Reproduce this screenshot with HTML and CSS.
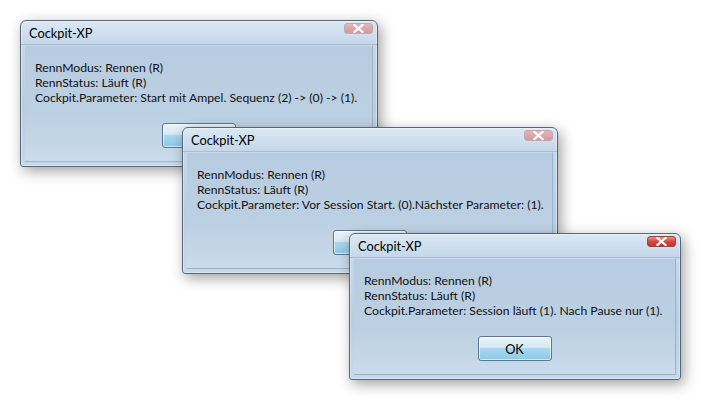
FILE: index.html
```html
<!DOCTYPE html>
<html>
<head>
<meta charset="utf-8">
<link rel="stylesheet" href="styles.css">
</head>
<body>
<div class="desktop">
  <div class="win win1">
    <div class="titlebar"><span class="title">Cockpit-XP</span><span class="close inactive"><svg width="11" height="9" viewBox="0 0 11 9"><path d="M1.5 1 L9.5 8 M9.5 1 L1.5 8" stroke="#fff" stroke-width="2.2" stroke-linecap="square"/></svg></span></div>
    <div class="client">
      <div class="msg">
        <div>RennModus: Rennen (R)</div>
        <div>RennStatus: Läuft (R)</div>
        <div>Cockpit.Parameter: Start mit Ampel. Sequenz (2) -&gt; (0) -&gt; (1).</div>
      </div>
      <div class="btnrow"><button class="btn">OK</button></div>
    </div>
  </div>
  <div class="win win2">
    <div class="titlebar"><span class="title">Cockpit-XP</span><span class="close inactive"><svg width="11" height="9" viewBox="0 0 11 9"><path d="M1.5 1 L9.5 8 M9.5 1 L1.5 8" stroke="#fff" stroke-width="2.2" stroke-linecap="square"/></svg></span></div>
    <div class="client">
      <div class="msg">
        <div>RennModus: Rennen (R)</div>
        <div>RennStatus: Läuft (R)</div>
        <div>Cockpit.Parameter: Vor Session Start. (0).Nächster Parameter: (1).</div>
      </div>
      <div class="btnrow"><button class="btn">OK</button></div>
    </div>
  </div>
  <div class="win win3">
    <div class="titlebar"><span class="title">Cockpit-XP</span><span class="close active"><svg width="11" height="9" viewBox="0 0 11 9"><path d="M1.5 1 L9.5 8 M9.5 1 L1.5 8" stroke="#fff" stroke-width="2.2" stroke-linecap="square"/></svg></span></div>
    <div class="client">
      <div class="msg">
        <div>RennModus: Rennen (R)</div>
        <div>RennStatus: Läuft (R)</div>
        <div>Cockpit.Parameter: Session läuft (1). Nach Pause nur (1).</div>
      </div>
      <div class="btnrow"><button class="btn">OK</button></div>
    </div>
  </div>
</div>
</body>
</html>
```
FILE: styles.css
```css
html, body {
  margin: 0;
  padding: 0;
  background: #ffffff;
}
.desktop {
  position: relative;
  width: 701px;
  height: 401px;
  overflow: hidden;
  font-family: "Lato", "Noto Sans", sans-serif;
  font-size: 12.2px;
  color: #111;
}
.win {
  position: absolute;
  height: 147px;
  box-sizing: border-box;
  border: 1px solid #566779;
  border-radius: 6px 6px 3px 3px;
  background: linear-gradient(#dbe8f4 0px, #c5d8ea 22px, #b9cde1 60%, #c6d9ea 100%);
  box-shadow: 0 0 0 1px rgba(255,255,255,0.35) inset, 3px 4px 14px rgba(0,0,0,0.38);
  display: flex;
  flex-direction: column;
}
.win1 { left: 20px; top: 20px; width: 358px; }
.win2 { left: 182px; top: 127px; width: 376px; }
.win3 { left: 349px; top: 233px; width: 332px; }
.titlebar {
  height: 23px;
  display: flex;
  align-items: flex-start;
  justify-content: space-between;
  padding: 0 4px 0 8px;
  border-bottom: 1px solid #a8bdd2;
}
.title {
  margin-top: 4px;
  line-height: 16px;
  font-size: 12.8px;
  color: #000;
}
.close {
  width: 29px;
  height: 11px;
  margin-top: 2px;
  border-radius: 3px;
  display: flex;
  align-items: center;
  justify-content: center;
  box-sizing: border-box;
}
.close.inactive {
  background: linear-gradient(#e2b6bb, #d5979d);
  border: 1px solid #c6a7ad;
}
.close.active {
  background: linear-gradient(#ea8f86, #d8413a 55%, #c8352f);
  border: 1px solid #8c4b4b;
}
.client {
  flex: 1;
  margin: 0 4px 4px 4px;
  border-top: 1px solid #cbdaea;
  border-right: 1px solid #9fb3c7;
  border-bottom: 1px solid #9fb3c7;
  background: linear-gradient(#b7cce0 0%, #bcd0e3 60%, #c9dbec 100%);
  display: flex;
  flex-direction: column;
}
.msg {
  padding: 14px 0 0 10px;
  line-height: 15px;
  white-space: nowrap;
}
.btnrow {
  margin-top: auto;
  margin-bottom: 13px;
  display: flex;
  justify-content: center;
}
.btn {
  width: 74px;
  height: 25px;
  font-family: inherit;
  font-size: 12.8px;
  color: #000;
  border: 1px solid #5f7690;
  border-radius: 3px;
  background: linear-gradient(#eaf4fa 0%, #d6e8f3 45%, #a9d8ee 50%, #8cc9e6 100%);
  box-shadow: inset 0 0 0 1px rgba(255,255,255,0.6);
  padding: 0;
}
```
